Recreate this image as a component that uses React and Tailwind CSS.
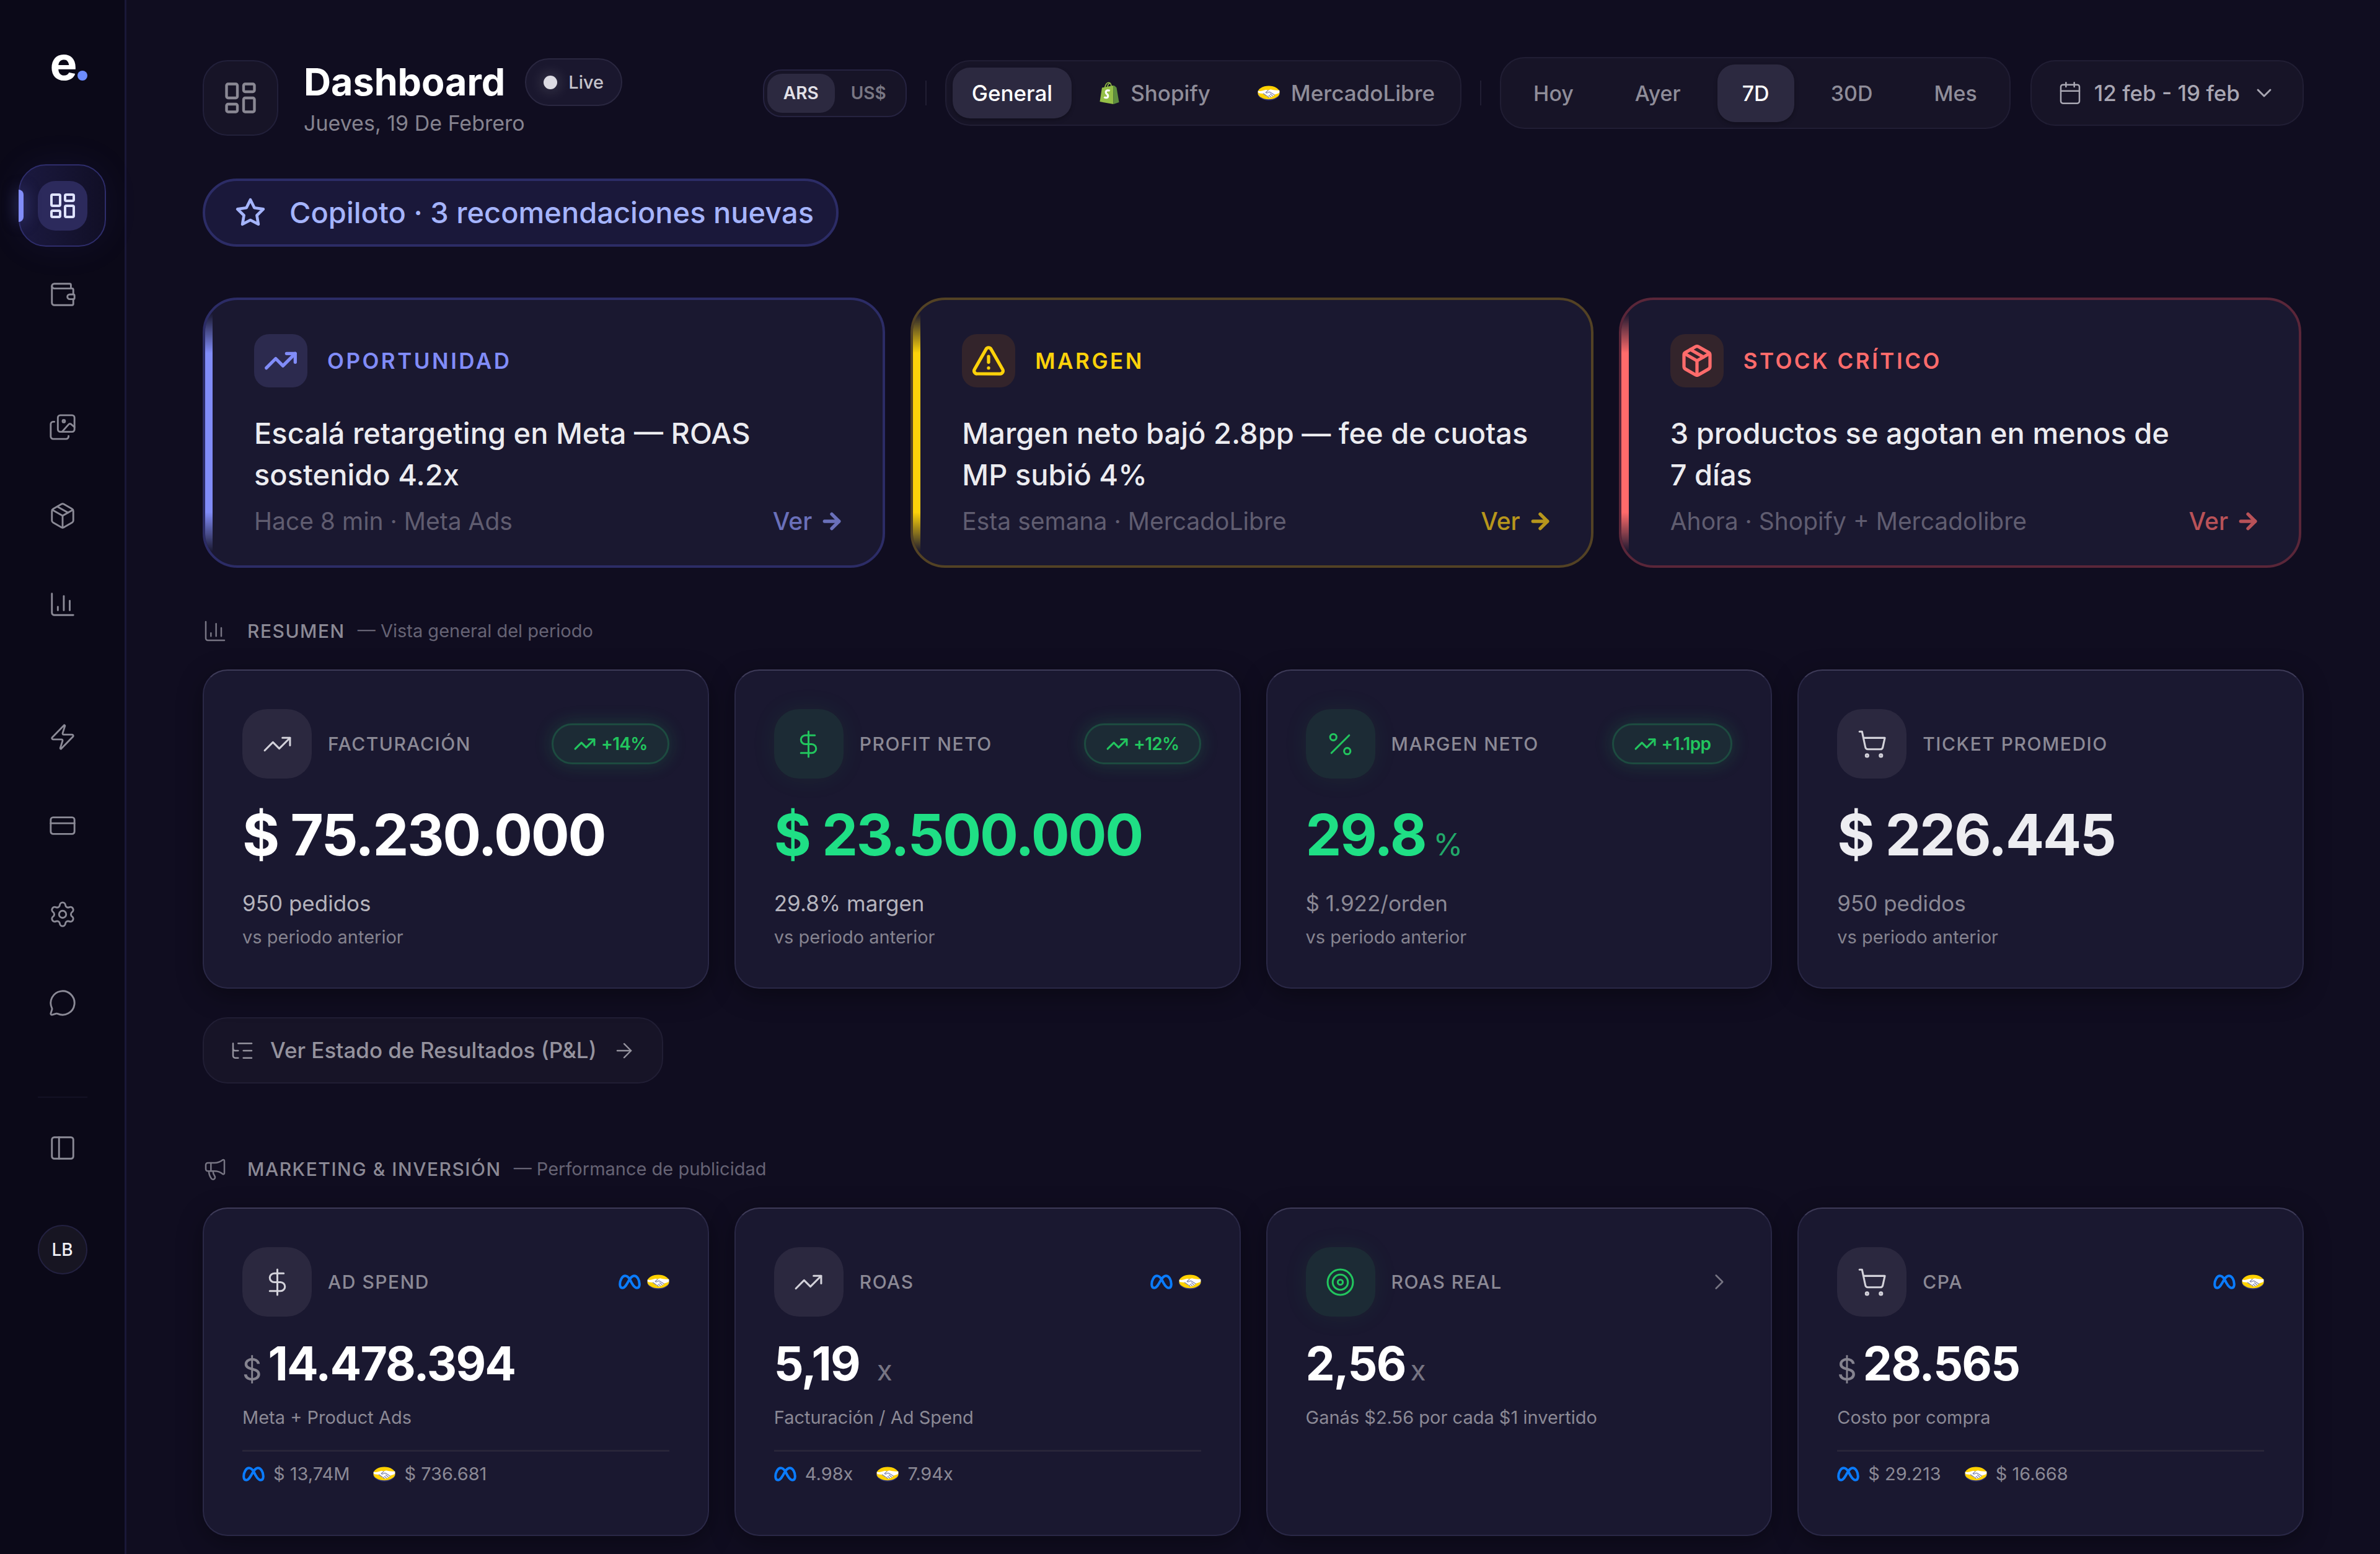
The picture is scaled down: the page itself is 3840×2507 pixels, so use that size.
import React from "react";
import {
  LayoutDashboard, Package, Zap, CreditCard, Settings, MessageCircle,
  PanelLeft, Calendar, ChevronDown, ChevronRight, TrendingUp, TriangleAlert, ArrowRight,
  DollarSign, Percent, ShoppingCart, ListTree, Megaphone, Target,
} from "lucide-react";

const sans = "font-[Inter,'Liberation_Sans',sans-serif]";

function Stroke({ size, strokeWidth = 1.5, children }) {
  return (
    <svg width={size} height={size} viewBox="0 0 24 24" fill="none" stroke="currentColor" strokeWidth={strokeWidth} strokeLinecap="round" strokeLinejoin="round" aria-hidden="true">
      {children}
    </svg>
  );
}

function BarsIcon(props) {
  return (
    <Stroke {...props}>
      <path d="M3 3v16a2 2 0 0 0 2 2h16" />
      <path d="M18 17V9" />
      <path d="M13 17V5" />
      <path d="M8 17v-3" />
    </Stroke>
  );
}

/* Wallet with a folded top edge and a clasp */
function WalletIcon(props) {
  return (
    <Stroke {...props}>
      <path d="M19 7V4a1 1 0 0 0-1-1H5a2 2 0 0 0 0 4h15a1 1 0 0 1 1 1v4h-3a2 2 0 0 0 0 4h3a1 1 0 0 0 1-1v-2a1 1 0 0 0-1-1" />
      <path d="M3 5v14a2 2 0 0 0 2 2h15a1 1 0 0 0 1-1v-4" />
    </Stroke>
  );
}

/* Two stacked pictures */
function ImagesIcon(props) {
  return (
    <Stroke {...props}>
      <path d="M5 7.500h-1a2 2 0 0 0-2 2V20a2 2 0 0 0 2 2h11a2 2 0 0 0 2-2v-.5" />
      <rect x="8" y="2" width="14" height="14" rx="2" />
      <circle cx="13" cy="7" r="1" />
      <path d="m11.500 16 5.600-6.300a1.500 1.500 0 0 1 2.200 0L22 12" />
    </Stroke>
  );
}

function StarIcon(props) {
  return (
    <Stroke {...props}>
      <polygon points="12 2 15.09 8.26 22 9.27 17 14.14 18.18 21.02 12 17.77 5.82 21.02 7 14.14 2 9.27 8.91 8.26 12 2" />
    </Stroke>
  );
}

function MetaIcon() {
  return (
    <svg className="h-6 w-9 shrink-0" viewBox="0 0 36 24" fill="none" stroke="#0a7cff" strokeWidth="4" strokeLinecap="round" strokeLinejoin="round" role="img" aria-label="Meta">
      <path d="M18 7.500C15.600 4 13.400 2.200 10.800 2.200 5.800 2.200 2.200 9.500 2.200 15.800c0 3.700 1.600 5.900 4.300 5.900 3.400 0 5.600-4 8.600-9.200C18.500 6.400 21.200 2.200 25.200 2.200c5 0 8.600 7 8.600 13.600 0 3.700-1.600 5.900-4.300 5.900-3.400 0-5.600-3.200-8.400-8.200L18 7.500" />
    </svg>
  );
}

function MercadoIcon() {
  return (
    <svg className="h-6 w-9 shrink-0" viewBox="0 0 36 24" role="img" aria-label="MercadoLibre">
      <ellipse cx="18" cy="12.400" rx="17.800" ry="11.500" fill="#2d3277" />
      <ellipse cx="18" cy="11.400" rx="17.600" ry="10.900" fill="#ffd100" />
      <path d="M.6 8.500C4 9.200 7 9 10 7.800L13.500 6.800 17 7.600 21 6.200C25 7.400 30 8 35.200 7.500c.5 1.600.3 3.200-.6 4.800L28 14.500l-3.500 3L20 19.500l-4.500-2L9 13 1.800 12.300C.9 11.200.5 9.800.6 8.500z" fill="#fff" />
      <path d="M17 8l-3.800 3.200c1.300 1.200 3.400.8 5.200-.8l2 .3 7 4.500M24.500 17l-4-3.500M21.500 18.500l-3-2.800M18 19l-2-2M9.500 13l5 3.600" fill="none" stroke="#7d82aa" strokeWidth="1.200" strokeLinecap="round" strokeLinejoin="round" />
    </svg>
  );
}

function ShopifyIcon() {
  return (
    <svg className="h-9 w-8 shrink-0" viewBox="0 0 32 36" role="img" aria-label="Shopify">
      <path d="M8.500 10.500c.5-5 3-9.300 6-9.300 3 0 4.500 3 4.500 7M12.500 9.500c.5-4 2.500-7.300 5-7.300" fill="none" stroke="#95bf47" strokeWidth="1.600" />
      <path d="M4 9.500L22 6l.5 30L.5 32z" fill="#95bf47" />
      <path d="M22 6l2.500.4 3 3.200L31.500 33l-9 3z" fill="#5e8e3e" />
      <path d="M16.500 14.500c-1.200-.7-2.600-.9-3.700-.6-3.400.9-3.200 4.400-.8 6 2.700 1.900 2 5.500-.8 5.800-1.400.1-2.700-.4-3.700-1.200" fill="none" stroke="#fff" strokeWidth="3.200" />
    </svg>
  );
}

/* ---------- sidebar ---------- */

function NavLink({ icon: Icon, label }) {
  return (
    <a href="#" aria-label={label} className="flex h-[133px] w-[141px] items-center justify-center rounded-[44px] text-[#8b8a96]">
      <Icon size={46} strokeWidth={1.5} />
    </a>
  );
}

function Sidebar() {
  return (
    <aside className="flex w-[204px] shrink-0 flex-col items-center border-r-[3px] border-[#1a1838] bg-[#0b0918]">
      <div className="mt-[54px] flex h-[96px] items-center pl-5 text-[74px] leading-none font-bold text-white">
        <span>e</span>
        <span className="mt-10 size-4 rounded-full bg-[#6c8cff]" />
      </div>
      <nav className="mt-[115px] flex flex-col items-center gap-[10px]">
        <a href="#" aria-label="Dashboard" aria-current="page" className="relative flex h-[133px] w-[141px] items-center justify-center rounded-[44px] border-2 border-[#2e2d6b] bg-linear-to-r from-[#1b1940] to-[#110f26] text-[#dfe3ff] shadow-[0_0_60px_rgba(99,102,241,0.08)]">
          <span className="absolute top-[39px] -left-[2px] h-[52px] w-2 rounded-r-full bg-[#818cf8] shadow-[0_0_24px_rgba(129,140,248,0.5)]" />
          <span className="flex size-20 items-center justify-center rounded-[28px] bg-[#2c2a5c]">
            <LayoutDashboard size={48} strokeWidth={2} />
          </span>
        </a>
        <NavLink icon={WalletIcon} label="Finanzas" />
        <div className="mt-[71px] flex flex-col gap-[10px]">
          <NavLink icon={ImagesIcon} label="Creativos" />
          <NavLink icon={Package} label="Productos" />
          <NavLink icon={BarsIcon} label="Reportes" />
        </div>
        <div className="mt-[71px] flex flex-col gap-[10px]">
          <NavLink icon={Zap} label="Integraciones" />
          <NavLink icon={CreditCard} label="Pagos" />
          <NavLink icon={Settings} label="Configuración" />
          <NavLink icon={MessageCircle} label="Soporte" />
        </div>
      </nav>
      <div className="mt-[85px] h-[2px] w-[80px] bg-[#131124]" />
      <button type="button" aria-label="Contraer panel" className="mt-[58px] text-[#8b8a96]">
        <PanelLeft size={46} strokeWidth={1.5} />
      </button>
      <button type="button" className="mt-[101px] flex size-20 items-center justify-center rounded-full border-2 border-[#232140] bg-[#171522] text-[28px] font-medium text-[#f0f0f5]">
        LB
      </button>
    </aside>
  );
}

/* ---------- header ---------- */

function Tab({ active, children }) {
  return (
    <button type="button" className={`flex h-[82px] items-center gap-[18px] rounded-[28px] px-[31px] ${active ? "bg-[#2c2940] text-white shadow-[0_3px_6px_rgba(0,0,0,0.25)]" : "text-[#8f8d99]"}`}>
      {children}
    </button>
  );
}

function Header() {
  const ranges = ["Hoy", "Ayer", "7D", "30D", "Mes"];
  return (
    <header className="flex items-start justify-between">
      <div className="flex items-start">
        <div className="mt-[5px] flex size-[122px] items-center justify-center rounded-[40px] border-2 border-[#22203a] bg-[#171427] text-[#8a8894]">
          <LayoutDashboard size={60} strokeWidth={1.75} />
        </div>
        <div className="mt-[2px] ml-[41px]">
          <div className="flex items-center gap-8">
            <h1 className="text-[61px] leading-[77px] font-bold text-white">Dashboard</h1>
            <div className="flex h-[77px] items-center gap-[18px] rounded-full border-2 border-[#2a2740] bg-[#1a172e] px-[28px] text-[29px] font-medium text-[#c4c3cb]">
              <span className="size-[22px] rounded-full bg-[#dcdbe3] shadow-[0_0_24px_rgba(255,255,255,0.25)]" />
              Live
            </div>
          </div>
          <p className="mt-1 text-[34px] leading-[48px] text-[#85838f]">Jueves, 19 De Febrero</p>
        </div>
      </div>

      <div className="flex h-[116px] items-center text-[35px] font-medium">
        <div className="flex h-[77px] items-center rounded-[30px] border-2 border-[#262340] bg-[#171427] px-[5px] text-[28px] font-semibold">
          <button type="button" className="h-[63px] rounded-[24px] bg-[#2c2940] px-[26px] text-[#e2e1e8]">ARS</button>
          <button type="button" className="h-[63px] px-[26px] text-[#797783]">US$</button>
        </div>
        <span className="mx-[30px] h-10 w-[2px] bg-[#211e33]" />
        <div className="flex h-[106px] items-center gap-[14px] rounded-[40px] border-2 border-[#211e34] bg-[#171427] px-[10px]">
          <Tab active>General</Tab>
          <Tab><ShopifyIcon />Shopify</Tab>
          <Tab><MercadoIcon />MercadoLibre</Tab>
        </div>
        <span className="mx-[30px] h-10 w-[2px] bg-[#211e33]" />
        <div className="flex h-[116px] items-center gap-[19px] rounded-[40px] border-2 border-[#211e34] bg-[#171427] px-3 text-[34px]">
          {ranges.map((r) => (
            <button key={r} type="button" className={`h-[93px] rounded-[28px] px-10 ${r === "7D" ? "bg-[#2c2940] text-white shadow-[0_3px_6px_rgba(0,0,0,0.25)]" : "text-[#8f8d99]"}`}>
              {r}
            </button>
          ))}
        </div>
        <button type="button" className="ml-8 flex h-[106px] items-center gap-[19px] rounded-[40px] border-2 border-[#211e34] bg-[#171427] px-[42px] text-[#a9a7b3]">
          <Calendar size={40} strokeWidth={1.5} />
          12 feb - 19 feb
          <ChevronDown size={40} strokeWidth={1.75} />
        </button>
      </div>
    </header>
  );
}

/* ---------- insights ---------- */

const insights = [
  {
    icon: TrendingUp, kind: "OPORTUNIDAD", text: "Escalá retargeting en Meta — ROAS sostenido 4.2x", meta: "Hace 8 min · Meta Ads",
    border: "border-[#2c2c66]", bar: "bg-[#818cf8]", box: "bg-[#2c2a4e]", color: "text-[#818cf8]", link: "text-[#6a70ba]",
  },
  {
    icon: TriangleAlert, kind: "MARGEN", text: "Margen neto bajó 2.8pp — fee de cuotas MP subió 4%", meta: "Esta semana · MercadoLibre",
    border: "border-[#534224]", bar: "bg-[#fdd20a]", box: "bg-[#33242b]", color: "text-[#fdd20a]", link: "text-[#b7961c]",
  },
  {
    icon: Package, kind: "STOCK CRÍTICO", text: "3 productos se agotan en menos de 7\u00a0días", meta: "Ahora · Shopify + Mercadolibre",
    border: "border-[#5a2639]", bar: "bg-[#ff6b6b]", box: "bg-[#33242b]", color: "text-[#ff6b6b]", link: "text-[#b95258]",
  },
];

function Insight({ icon: Icon, kind, text, meta, border, bar, box, color, link }) {
  return (
    <article className={`relative overflow-hidden rounded-[56px] border-4 bg-[#1a1830] pt-[55px] pr-[62px] pb-[41px] pl-[79px] ${border}`}>
      <span className={`absolute inset-y-0 left-0 w-3 mask-[linear-gradient(to_bottom,transparent_5%,black_20%,black_80%,transparent_95%)] ${bar}`} />
      <div className="flex items-center gap-8">
        <span className={`flex size-[86px] items-center justify-center rounded-[24px] ${box} ${color}`}>
          <Icon size={56} strokeWidth={2.25} />
        </span>
        <h3 className={`text-[35px] font-semibold tracking-widest ${color}`}>{kind}</h3>
      </div>
      <p className="mt-10 max-w-[930px] text-[47px] leading-[67px] font-medium text-[#ececf0]">{text}</p>
      <div className="mt-3 flex items-center justify-between text-[39px] leading-[60px]">
        <span className="text-[#605d70]">{meta}</span>
        <a href="#" className={`flex items-center gap-3 font-medium ${link}`}>
          Ver <ArrowRight size={40} strokeWidth={3.25} />
        </a>
      </div>
    </article>
  );
}

/* ---------- KPI cards ---------- */

function SectionTitle({ icon: Icon, title, note }) {
  return (
    <div className="flex h-[40px] items-center text-[30px] leading-[40px]">
      <span className="text-[#777583]"><Icon size={40} strokeWidth={1.5} /></span>
      <h2 className="ml-8 font-medium tracking-wider text-[#8b8995]">{title}</h2>
      <span className="ml-5 text-[29px] text-[#666374]">— {note}</span>
    </div>
  );
}

const cardClass = "rounded-[40px] border-2 border-[#2a2846] border-t-[#3e3b58] bg-[#1a1830] px-[62px] shadow-[0_10px_40px_rgba(0,0,0,0.35)]";

function CardHead({ icon: Icon, label, green, children }) {
  return (
    <div className="flex h-[112px] items-center">
      <span className={`flex size-[112px] shrink-0 items-center justify-center rounded-[40px] ${green ? "bg-[#1c2b35] text-[#22c55e] shadow-[0_0_40px_rgba(34,197,94,0.08)]" : "bg-[#2b283f] text-[#d3d2da]"}`}>
        <Icon size={49} strokeWidth={1.5} />
      </span>
      <h3 className="ml-[26px] grow text-[30px] font-medium tracking-wider text-[#8b8995]">{label}</h3>
      {children}
    </div>
  );
}

const summary = [
  { icon: TrendingUp, label: "FACTURACIÓN", delta: "+14%", value: "$ 75.230.000", color: "text-white", sub: "950 pedidos", subColor: "text-[#b5b4bd]" },
  { icon: DollarSign, label: "PROFIT NETO", delta: "+12%", value: "$ 23.500.000", color: "text-[#1fdf85]", sub: "29.8% margen", subColor: "text-[#b5b4bd]", green: true },
  { icon: Percent, label: "MARGEN NETO", delta: "+1.1pp", value: "29.8", unit: "%", color: "text-[#1fdf85]", sub: "$ 1.922/orden", subColor: "text-[#8b8995]", green: true },
  { icon: ShoppingCart, label: "TICKET PROMEDIO", value: "$ 226.445", color: "text-[#ededf1]", sub: "950 pedidos", subColor: "text-[#8b8995]" },
];

function SummaryCard({ icon, label, delta, value, unit, color, sub, subColor, green }) {
  return (
    <article className={`${cardClass} h-[515px] pt-[62px]`}>
      <CardHead icon={icon} label={label} green={green}>
        {delta && (
          <span className="flex h-[66px] items-center gap-2 rounded-full border-[3px] border-[#1d4b40] bg-[#1c2b35] px-[32px] text-[28px] font-semibold tracking-tight text-[#22c55e] shadow-[0_0_30px_rgba(34,197,94,0.2)]">
            <TrendingUp size={37} strokeWidth={2} />
            {delta}
          </span>
        )}
      </CardHead>
      <p className={`mt-[31px] flex items-baseline gap-3 text-[92px] leading-[120px] font-bold tracking-tight ${color}`}>
        {value}
        {unit && <span className="text-[49px] leading-none font-normal text-[#22a869]">{unit}</span>}
      </p>
      <p className={`mt-[26px] text-[35px] leading-[48px] ${subColor}`}>{sub}</p>
      <p className="mt-[11px] text-[29px] leading-[40px] text-[#85838f]">vs periodo anterior</p>
    </article>
  );
}

const marketing = [
  { icon: DollarSign, label: "AD SPEND", prefix: "$", value: "14.478.394", sub: "Meta + Product Ads", meta: "$ 13,74M", ml: "$ 736.681" },
  { icon: TrendingUp, label: "ROAS", value: "5,19", unit: "x", unitGap: "ml-7", sub: "Facturación / Ad Spend", meta: "4.98x", ml: "7.94x" },
  { icon: Target, label: "ROAS REAL", value: "2,56", unit: "x", unitGap: "ml-2", sub: "Ganás $2.56 por cada $1 invertido", green: true },
  { icon: ShoppingCart, label: "CPA", prefix: "$", value: "28.565", sub: "Costo por compra", meta: "$ 29.213", ml: "$ 16.668" },
];

function MarketingCard({ icon, label, prefix, value, unit, unitGap, sub, meta, ml, green }) {
  return (
    <article className={`${cardClass} h-[530px] pt-[62px]`}>
      <CardHead icon={icon} label={label} green={green}>
        {meta ? (
          <span className="flex items-center gap-[10px]"><MetaIcon /><MercadoIcon /></span>
        ) : (
          <button type="button" aria-label="Ver detalle" className="text-[#777583]"><ChevronRight size={42} strokeWidth={1.5} /></button>
        )}
      </CardHead>
      <p className="mt-[26px] flex items-baseline text-[75px] leading-[100px] font-bold tracking-tight text-white">
        {prefix && <span className="mr-3 text-[49px] leading-none font-normal text-[#85838f]">{prefix}</span>}
        {value}
        {unit && <span className={`text-[46px] leading-none font-normal text-[#777583] ${unitGap}`}>{unit}</span>}
      </p>
      <p className="mt-4 text-[29px] leading-[42px] text-[#8b8995]">{sub}</p>
      {meta && (
        <div className="mt-[31px] flex items-center gap-[14px] border-t-[3px] border-[#282539] pt-[15px] text-[29px] leading-[42px] text-[#8b8995]">
          <MetaIcon />
          <span>{meta}</span>
          <span className="ml-6"><MercadoIcon /></span>
          <span>{ml}</span>
        </div>
      )}
    </article>
  );
}

export default function App() {
  return (
    <div className={`flex min-h-screen bg-[#100d20] ${sans}`}>
      <Sidebar />
      <main className="min-w-0 grow px-[123px] pt-[92px] pb-7">
        <Header />

        <button type="button" className="mt-[65px] flex h-[110px] items-center gap-[38px] rounded-full border-4 border-[#2c2c66] bg-[#1a183a] pr-[36px] pl-12 text-[47px] font-medium text-[#a5b4fc]">
          <StarIcon size={50} strokeWidth={2.25} />
          Copiloto · 3 recomendaciones nuevas
        </button>

        <section className="mt-[82px] mr-1 grid grid-cols-3 gap-[41px]">
          {insights.map((i) => <Insight key={i.kind} {...i} />)}
        </section>

        <section className="mt-[82px]">
          <SectionTitle icon={BarsIcon} title="RESUMEN" note="Vista general del periodo" />
          <div className="mt-[42px] grid grid-cols-4 gap-[41px]">
            {summary.map((s) => <SummaryCard key={s.label} {...s} />)}
          </div>
          <button type="button" className="mt-[46px] flex h-[107px] items-center gap-[25px] rounded-[40px] border-2 border-[#211e34] bg-[#171427] px-[42px] text-[35px] font-medium text-[#95939e]">
            <ListTree size={40} strokeWidth={1.5} />
            Ver Estado de Resultados (P&amp;L)
            <ArrowRight size={38} strokeWidth={1.5} />
          </button>
        </section>

        <section className="mt-[118px]">
          <SectionTitle icon={Megaphone} title="MARKETING & INVERSIÓN" note="Performance de publicidad" />
          <div className="mt-[42px] grid grid-cols-4 gap-[41px]">
            {marketing.map((m) => <MarketingCard key={m.label} {...m} />)}
          </div>
        </section>
      </main>
    </div>
  );
}
